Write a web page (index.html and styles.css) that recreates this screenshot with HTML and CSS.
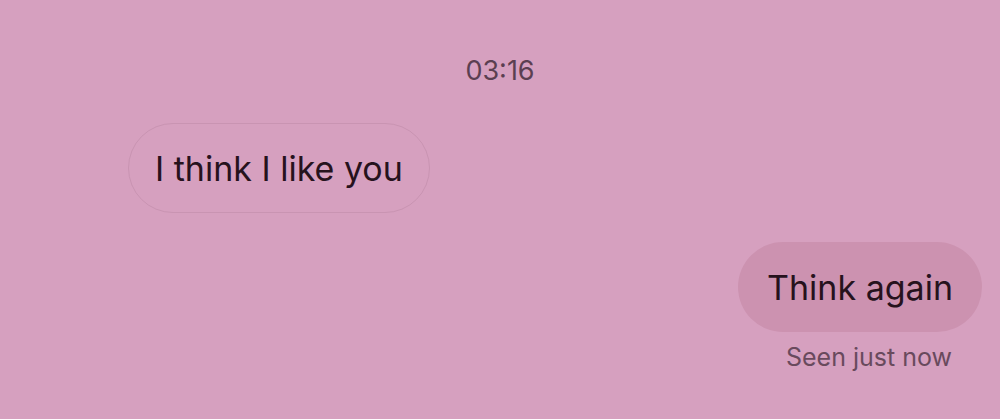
FILE: index.html
```html
<!DOCTYPE html>
<html lang="en">
<head>
  <meta charset="UTF-8">
  <meta name="viewport" content="width=device-width, initial-scale=1.0">
  <title>Chat</title>
  <link rel="stylesheet" href="styles.css">
</head>
<body>
  <div class="thread">
    <div class="stamp">03:16</div>

    <div class="row in">
      <div class="bubble outline">I think I like you</div>
    </div>

    <div class="row out">
      <div class="bubble filled">Think again</div>
      <div class="seen">Seen just now</div>
    </div>
  </div>
</body>
</html>
```

FILE: styles.css
```css
body { margin: 0; background: #d6a0bf; font-family: Inter, Roboto, "Liberation Sans", sans-serif; color: #26121d; }
.thread { height: 419px; padding: 56px 18px 0 128px; box-sizing: border-box; display: flex; flex-direction: column; }
.stamp { text-align: center; font-size: 27px; color: #5b3f51; margin-left: -110px; line-height: 30px; }
.row { display: flex; flex-direction: column; }
.row.in { align-items: flex-start; margin-top: 37px; }
.row.out { align-items: flex-end; margin-top: 29px; }
.bubble { height: 90px; box-sizing: border-box; border-radius: 45px; padding: 0 26px; display: flex; align-items: center; font-size: 34px; }
.bubble.outline { border: 1.5px solid #c994b2; }
.bubble.filled { background: #cc92b0; padding: 0 29px; }
.seen { font-size: 25px; color: #694a5d; margin-top: 10px; margin-right: 30px; line-height: 30px; }
```
